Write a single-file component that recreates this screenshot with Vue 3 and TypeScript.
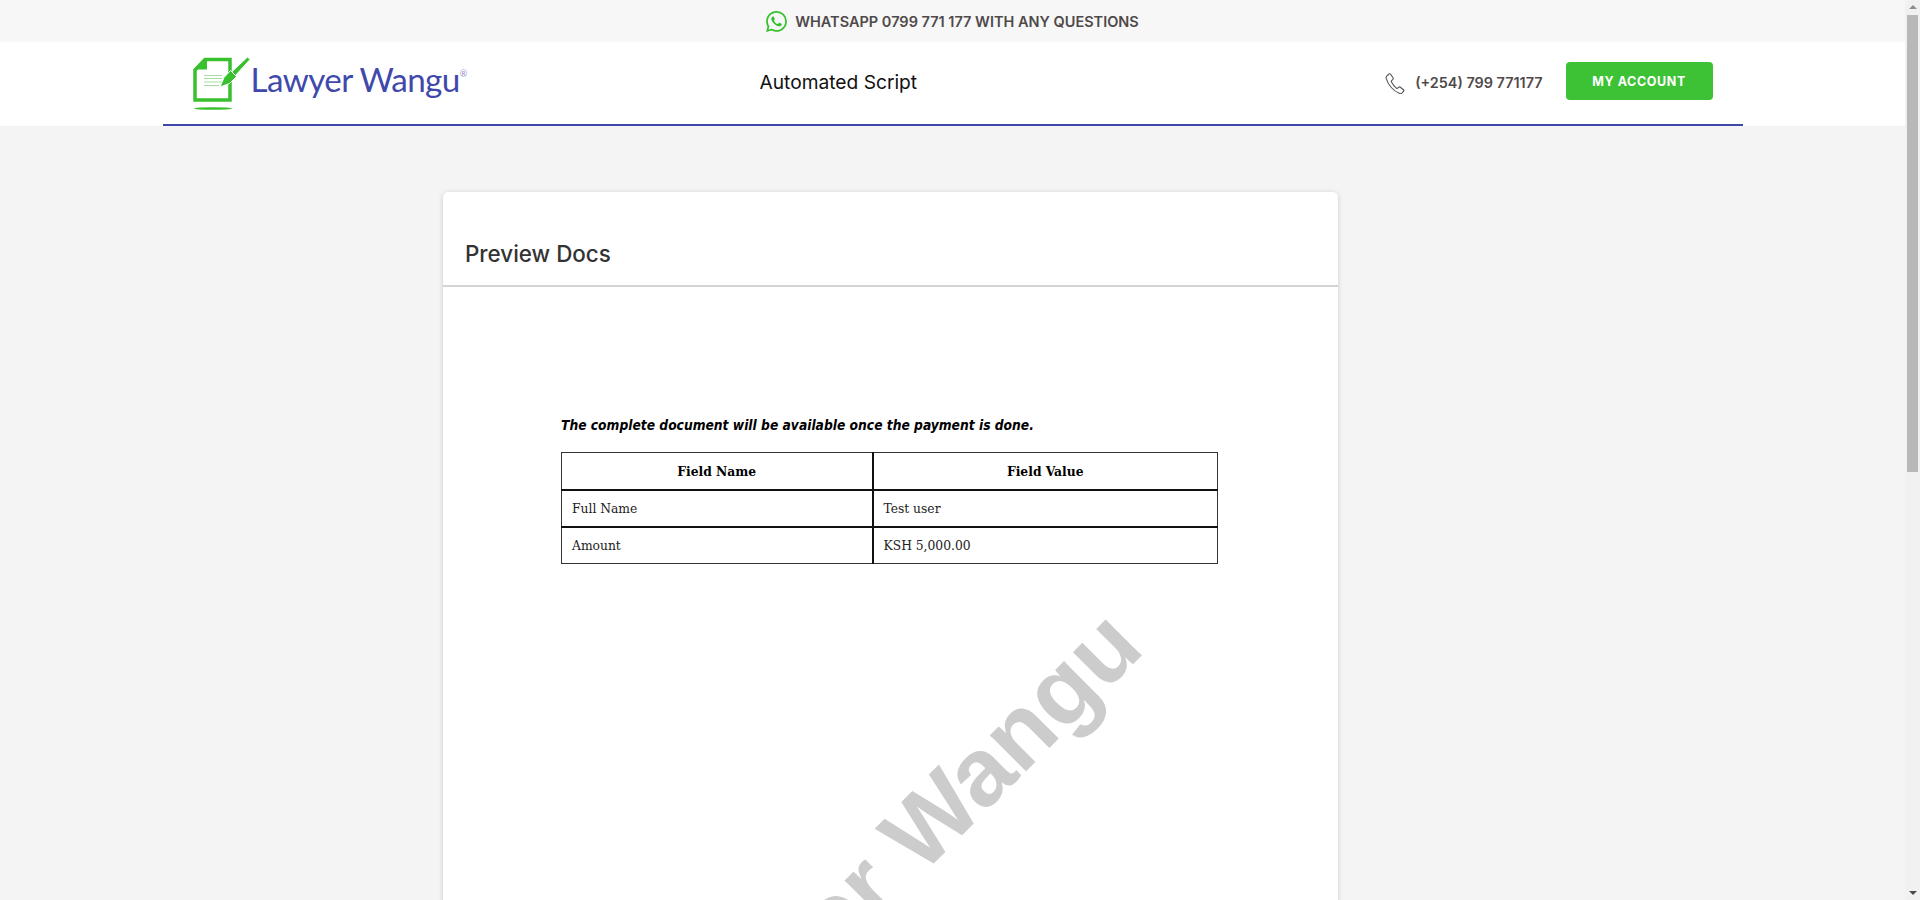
<script setup lang="ts">
const rows = [
  { name: 'Full Name', value: 'Test user' },
  { name: 'Amount', value: 'KSH 5,000.00' },
]
</script>

<template>
  <div class="page">
    <div class="topbar">
      <svg class="wa-icon" viewBox="0 0 24 24" aria-hidden="true">
        <path d="M17.472 14.382c-.297-.149-1.758-.867-2.03-.967-.273-.099-.471-.148-.67.15-.197.297-.767.966-.94 1.164-.173.199-.347.223-.644.075-.297-.15-1.255-.463-2.39-1.475-.883-.788-1.48-1.761-1.653-2.059-.173-.297-.018-.458.13-.606.134-.133.298-.347.446-.52.149-.174.198-.298.298-.497.099-.198.05-.371-.025-.52-.075-.149-.669-1.612-.916-2.207-.242-.579-.487-.5-.669-.51-.173-.008-.371-.01-.57-.01-.198 0-.52.074-.792.372-.272.297-1.04 1.016-1.04 2.479 0 1.462 1.065 2.875 1.213 3.074.149.198 2.096 3.2 5.077 4.487.709.306 1.262.489 1.694.625.712.227 1.36.195 1.871.118.571-.085 1.758-.719 2.006-1.413.248-.694.248-1.289.173-1.413-.074-.124-.272-.198-.57-.347m-5.421 7.403h-.004a9.87 9.87 0 01-5.031-1.378l-.361-.214-3.741.982.998-3.648-.235-.374a9.86 9.86 0 01-1.51-5.26c.001-5.45 4.436-9.884 9.888-9.884 2.64 0 5.122 1.03 6.988 2.898a9.825 9.825 0 012.893 6.994c-.003 5.45-4.437 9.884-9.885 9.884m8.413-18.297A11.815 11.815 0 0012.05 0C5.495 0 .16 5.335.157 11.892c0 2.096.547 4.142 1.588 5.945L.057 24l6.305-1.654a11.882 11.882 0 005.683 1.448h.005c6.554 0 11.89-5.335 11.893-11.893a11.821 11.821 0 00-3.48-8.413z" />
      </svg>
      <span>WHATSAPP 0799 771 177 WITH ANY QUESTIONS</span>
    </div>

    <header class="header">
      <div class="header-inner">
        <div class="logo">
          <svg class="logo-mark" viewBox="0 0 58 54" aria-hidden="true">
            <path class="sheet" d="M12 2.500H37V43H2V13Z" />
            <path class="corner" d="M1 12.500 11.500 2H14V12.500Z" />
            <path class="lines" d="M11 18.500H29M11 21.500H29M11 25H29M11 28.500H26" />
            <path class="pen" d="M54.500 0 57 2.500 42 19 37.500 16Z" />
            <path class="pen" d="M37.500 13.500 43.500 19.500 36.500 26.500 27 30 31 20.500Z" />
            <ellipse class="shadow" cx="20" cy="51.500" rx="19" ry="1.300" />
          </svg>
          <span class="logo-text">Lawyer Wangu<sup>®</sup></span>
        </div>
        <div class="title">Automated Script</div>
        <div class="contact">
          <svg class="phone-icon" viewBox="0 0 24 24" aria-hidden="true">
            <path d="M3 4.400 5.600 2.200c.6-.4 1.300-.3 1.700.3l2.600 4c.3.500.2 1.200-.2 1.600L8.300 9.400c-.4.400-.5.900-.2 1.400 1.300 2.300 3.200 4.800 5.400 6.700.4.400 1 .4 1.400.1l1.300-1c.5-.4 1.100-.4 1.600 0l3.400 2.800c.5.400.6 1.100.2 1.600l-1.900 2c-.6.600-1.500.8-2.300.5C10.500 21 4.200 14 2.300 6.700 2.100 5.800 2.400 5 3 4.400Z" />
          </svg>
          <span class="phone-number">(+254) 799 771177</span>
          <a class="account-btn">MY ACCOUNT</a>
        </div>
      </div>
    </header>

    <main class="main">
      <section class="card">
        <div class="card-head">
          <h2>Preview Docs</h2>
        </div>
        <div class="doc">
          <p class="notice">The complete document will be available once the payment is done.</p>
          <table class="fields">
            <thead>
              <tr>
                <th class="col-name">Field Name</th>
                <th>Field Value</th>
              </tr>
            </thead>
            <tbody>
              <tr v-for="row in rows" :key="row.name">
                <td>{{ row.name }}</td>
                <td>{{ row.value }}</td>
              </tr>
            </tbody>
          </table>
          <div class="watermark">Lawyer Wangu</div>
        </div>
      </section>
    </main>

    <!-- page scrollbar, the headless browser doesn't paint one -->
    <div class="scrollbar" aria-hidden="true">
      <span class="arrow arrow-up"></span>
      <span class="thumb"></span>
      <span class="arrow arrow-down"></span>
    </div>
  </div>
</template>

<style>
html,
body {
  margin: 0;
  background: #f4f4f4;
}
</style>

<style scoped>
.page {
  width: 1905px;
  min-height: 1713px;
  font-family: "Inter", "Open Sans", sans-serif;
  color: #333;
}

.topbar {
  height: 42px;
  box-sizing: border-box;
  padding-top: 1px;
  background: #f7f7f7;
  display: flex;
  align-items: center;
  justify-content: center;
  gap: 8px;
  font-size: 14.500px;
  font-weight: 600;
  color: #4f4a4a;
}
.wa-icon {
  width: 21px;
  height: 21px;
  fill: #38c02e;
}

.header {
  height: 84px;
  background: #fff;
}
.header-inner {
  width: 1580px;
  height: 84px;
  box-sizing: border-box;
  margin: 0 auto;
  border-bottom: 2.5px solid #3f48a8;
  display: flex;
  align-items: center;
}

.logo {
  width: 597px;
  box-sizing: border-box;
  padding-left: 30px;
  display: flex;
  align-items: center;
}
.logo-mark {
  width: 58px;
  height: 54px;
  flex: none;
  margin-top: 2px;
}
.sheet {
  fill: #fff;
  stroke: #38c02e;
  stroke-width: 3.500;
}
.corner,
.shadow {
  fill: #38c02e;
}
.pen {
  fill: #38c02e;
  stroke: #fff;
  stroke-width: 1;
}
.lines {
  fill: none;
  stroke: #a6dea0;
  stroke-width: 1;
}
.logo-text {
  font-family: "Lato", "Open Sans", sans-serif;
  font-size: 33.200px;
  color: #4049ab;
  letter-spacing: -0.6px;
  margin-top: -9px;
}
.logo-text sup {
  font-size: 9px;
  color: #8e93cc;
  vertical-align: 15px;
  line-height: 0;
}

.title {
  font-size: 19.200px;
  color: #111;
  margin-top: -3px;
}

.contact {
  margin-left: auto;
  padding-right: 30px;
  display: flex;
  align-items: center;
  margin-top: -4px;
}
.phone-icon {
  width: 22px;
  height: 22px;
  margin-top: 4px;
  margin-left: 2px;
  fill: none;
  stroke: #555;
  stroke-width: 1.200;
}
.phone-number {
  margin-left: 9px;
  margin-right: 23px;
  margin-top: 2px;
  font-size: 14.400px;
  font-weight: 600;
  color: #4f4a4a;
}
.account-btn {
  width: 147px;
  height: 38px;
  border-radius: 4px;
  background: #3dc135;
  color: #fff;
  font-size: 12.500px;
  font-weight: 700;
  letter-spacing: 0.6px;
  display: flex;
  align-items: center;
  justify-content: center;
}

.main {
  width: 1580px;
  margin: 0 auto;
  padding: 66px 0 60px 280.500px;
  box-sizing: border-box;
}
.card {
  width: 895px;
  background: #fff;
  border-radius: 5px;
  box-shadow: 0 1px 5px rgba(0, 0, 0, 0.18);
}
.card-head {
  height: 95px;
  box-sizing: border-box;
  padding: 47px 22px 0;
  border-bottom: 2px solid #d4d4d4;
}
.card-head h2 {
  margin: 0;
  font-size: 22.400px;
  line-height: 30px;
  font-weight: 500;
  color: #333;
}

.doc {
  position: relative;
  height: 1331px;
  box-sizing: border-box;
  padding: 129px 118px 0;
  overflow: hidden;
}
.notice {
  margin: 0 0 18px;
  font-family: "DejaVu Sans Condensed", "DejaVu Sans", sans-serif;
  font-stretch: condensed;
  font-size: 13.700px;
  line-height: 18px;
  font-weight: 700;
  font-style: italic;
  color: #000;
}
.fields {
  width: 657px;
  border-collapse: collapse;
  font-family: "DejaVu Serif Condensed", "DejaVu Serif", serif;
  font-stretch: condensed;
  font-size: 13.700px;
  color: #000;
}
.fields th,
.fields td {
  height: 37px;
  padding: 0 10px;
  box-sizing: border-box;
  border: 2px solid #111;
}
.fields td {
  text-align: left;
  color: #222;
}
.fields tr > :first-child {
  border-left: 1px solid #333;
}
.fields tr > :last-child {
  border-right: 1px solid #333;
}
.fields thead th {
  border-top: 1px solid #333;
}
.fields tbody tr:last-child td {
  border-bottom: 1px solid #333;
}
.col-name {
  width: 311px;
}

.watermark {
  position: absolute;
  left: 102px;
  top: 532px;
  font-family: "Liberation Sans", sans-serif;
  font-size: 96.500px;
  line-height: 1;
  font-weight: 700;
  color: #ccc;
  white-space: nowrap;
  transform: rotate(-45deg);
}

.scrollbar {
  position: fixed;
  top: 0;
  right: 0;
  width: 15px;
  height: 100vh;
  box-sizing: border-box;
  background: #f1f1f1;
  display: flex;
  flex-direction: column;
  align-items: center;
}
.thumb {
  width: 11px;
  height: 457px;
  background: #b8b8b8;
}
.arrow {
  width: 0;
  height: 0;
  border-left: 4px solid transparent;
  border-right: 4px solid transparent;
}
.arrow-up {
  margin: 5px 0 6px;
  border-bottom: 4px solid #8e8e8e;
}
.arrow-down {
  margin-top: auto;
  margin-bottom: 5px;
  border-top: 4px solid #4a4a4a;
}
</style>
